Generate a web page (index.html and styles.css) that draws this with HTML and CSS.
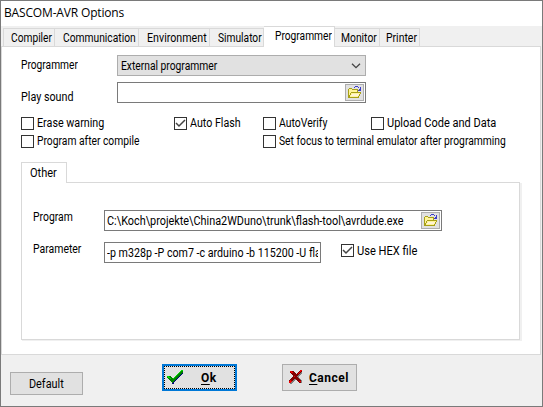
FILE: index.html
```
<!DOCTYPE html>
<html lang="en">
<head>
<meta charset="utf-8">
<title>BASCOM-AVR Options</title>
<link rel="stylesheet" href="styles.css">
</head>
<body>
<svg class="defs" aria-hidden="true">
  <symbol id="folder" viewBox="0 0 17 17" shape-rendering="crispEdges">
    <path d="M2 5h5v1h5v3h3l-3 5H2z" fill="#fff49a"/>
    <path d="M6 10h7l-1 2H5z" fill="#fff3d6"/>
    <path d="M3 4h3v1H3zM6 5h6v1H6zM2 5h1v8H2zM11 6h1v2h-1zM5 8h10v1H5zM4 9h1v2H4zM3 11h1v2H3zM14 9h1v1h-1zM13 10h1v2h-1zM12 12h1v1h-1zM2 13h11v1H2z" fill="#a8a018"/>
    <path d="M9 2h3v1H9zM8 3h1v1H8zM12 3h1v1h-1zM14 3h1v4h-3V6h1V5h1z" fill="#3c3cc8"/>
  </symbol>
  <symbol id="tick" viewBox="0 0 13 13">
    <path d="M2 6l3 3 6-6" fill="none" stroke="#444" stroke-width="1.5"/>
  </symbol>
</svg>
<main class="window">
  <header class="titlebar"><span class="title">BASCOM-AVR Options</span></header>
  <nav class="tabs">
    <div class="tab compiler"><span class="t">Compiler</span></div>
    <div class="tab communication"><span class="t">Communication</span></div>
    <div class="tab environment"><span class="t">Environment</span></div>
    <div class="tab simulator"><span class="t">Simulator</span></div>
    <div class="tab active"><span class="t">Programmer</span></div>
    <div class="tab monitor"><span class="t">Monitor</span></div>
    <div class="tab printer"><span class="t">Printer</span></div>
  </nav>
  <section class="page">
    <div class="row">
      <label class="t w85">Programmer</label>
      <div class="combo"><span class="t w86">External programmer</span>
        <svg class="chevron" viewBox="0 0 10 6"><path d="M1 .7l4 4 4-4" fill="none" stroke="#444" stroke-width="1.3"/></svg>
      </div>
    </div>
    <div class="row sound">
      <label class="t w90">Play sound</label>
      <div class="field"><span></span><button class="browse"><svg><use href="#folder"/></svg></button></div>
    </div>
    <div class="checks">
      <div class="check"><i class="box"></i><span class="t w90">Erase warning</span></div>
      <div class="check"><i class="box"><svg><use href="#tick"/></svg></i><span class="t w89">Auto Flash</span></div>
      <div class="check"><i class="box"></i><span class="t w88">AutoVerify</span></div>
      <div class="check"><i class="box"></i><span class="t w92">Upload Code and Data</span></div>
      <div class="check after"><i class="box"></i><span class="t w86">Program after compile</span></div>
      <div class="check"><i class="box"></i><span class="t w86">Set focus to terminal emulator after programming</span></div>
    </div>
    <div class="subtab"><span class="t w92">Other</span></div>
    <div class="panel">
      <div class="prow">
        <label class="t w87">Program</label>
        <div class="field path"><span class="t w91">C:\Koch\projekte\China2WDuno\trunk\flash-tool\avrdude.exe</span><button class="browse"><svg><use href="#folder"/></svg></button></div>
      </div>
      <div class="prow">
        <label class="t w88">Parameter</label>
        <div class="field params"><span class="clip"><span class="t w89">-p m328p -P com7 -c arduino -b 115200 -U fla</span></span></div>
        <div class="check hex"><i class="box"><svg><use href="#tick"/></svg></i><span class="t w93">Use HEX file</span></div>
      </div>
    </div>
  </section>
  <footer class="actions">
    <button class="btn default"><span class="t w91">Default</span></button>
    <button class="btn ok">
      <svg class="ok-icon" viewBox="0 0 17 15" shape-rendering="crispEdges">
        <path d="M1 7h2l3 3 9-9h1v2L7 13v1H5v-1L1 9z" fill="#000080"/>
        <path d="M0 6h3l3 3 8-9h2v2L6 12v1H5L0 8z" fill="#008000"/>
        <path d="M0 6h2v1h1v1h1v1H3V8H1V7H0zM14 0h2v1h-2v1h-1v1h-1v1h-1v1h-1v1H9v1H8v1H7v1H6V8h1V7h1V6h1V5h1V4h1V3h1V2h1V1h1z" fill="#00e000"/>
      </svg>
      <span class="t bold"><u>O</u>k</span>
    </button>
    <button class="btn cancel">
      <svg class="cancel-icon" viewBox="0 0 14 15" shape-rendering="crispEdges">
        <path d="M2 2h3l3 3 4-4h1v2L9 7l4 4v2h-2L7 9l-4 5H1v-2l4-5-3-4z" fill="#808080"/>
        <path d="M1 1h3l3 3 4-4h2v1L8 6l4 5v2h-2L6 8l-4 5H0v-2l4-5-3-3z" fill="#800000"/>
        <path d="M1 1h2v1h1v1H2V2H1zM11 0h2v1h-1v1h-1v1h-1v1H9V3h1V2h1zM0 11h1v-1h1v1h1v1H2v1H0zM5 6h1v1H5zM10 11h2v1h-2z" fill="#f00000"/>
      </svg>
      <span class="t bold"><u>C</u>ancel</span>
    </button>
  </footer>
</main>
</body>
</html>
```
FILE: styles.css
```
* { box-sizing: border-box; }
body { margin: 0; font: 12px/14px Roboto, "Liberation Sans", sans-serif; color: #000; }
button { font: inherit; color: inherit; padding: 0; margin: 0; border-radius: 0; }
svg { display: block; }
.defs { position: absolute; width: 0; height: 0; }

.window {
  width: 543px; height: 407px; overflow: hidden;
  border: 1px solid #7a7a7a; background: #f0f0f0;
  display: flex; flex-direction: column;
}
.titlebar { height: 25px; flex: none; background: #fff; padding: 4px 0 0 3px; }
.title { font: 12px/16px "Open Sans", sans-serif; letter-spacing: -.16px; white-space: nowrap; }

/* Narrow label text: each width class sets the horizontal scale. */
.t { display: inline-block; white-space: nowrap; transform: scaleX(var(--s, .86)); transform-origin: 0 50%; }
.w85 { --s: .85; } .w86 { --s: .857; } .w87 { --s: .865; } .w88 { --s: .87; }
.w89 { --s: .889; } .w90 { --s: .895; } .w91 { --s: .904; } .w92 { --s: .918; } .w93 { --s: .927; }

.tabs { display: flex; height: 21px; flex: none; align-items: flex-end; padding-left: 2px; position: relative; z-index: 1; }
.tab { height: 19px; flex: none; border: 1px solid #d9d9d9; border-left: 0; padding: 2px 0 0 8px; }
.compiler { width: 52px; border-left: 1px solid #d9d9d9; --s: .85; padding-left: 7px; }
.communication { width: 84px; --s: .855; }
.environment { width: 71px; --s: .89; }
.simulator { width: 54px; --s: .85; }
.active { width: 71px; height: 21px; background: #fff; border-bottom: 0; --s: .85; padding: 2px 0 0 11px; }
.monitor { width: 45px; --s: .86; padding-left: 6px; }
.printer { width: 40px; --s: .87; padding-left: 6px; }

.page {
  height: 309px; width: 540px; margin-top: -1px; flex: none;
  background: #fff; border: 1px solid #d9d9d9;
  padding: 8px 19px 0 19px;
}
.row { display: grid; grid-template-columns: 96px 249px; height: 21px; }
.row label { padding-top: 3px; }
.sound { margin-top: 6px; }
.sound label { padding-top: 8px; }
.combo { background: #e1e1e1; border: 1px solid #adadad; display: flex; align-items: center; justify-content: space-between; padding: 0 4px 0 3px; }
.chevron { width: 10px; height: 6px; }
.field { background: #fff; border: 1px solid #7a7a7a; display: flex; justify-content: space-between; align-items: center; height: 21px; min-width: 0; }
.browse { width: 19px; height: 17px; flex: none; margin-right: 1px; background: #e1e1e1; border: 1px solid #adadad; }
.browse svg { width: 17px; height: 17px; margin-top: -1px; }

.checks { display: grid; grid-template-columns: 153px 89px 108px 150px; grid-template-rows: 18px 18px; margin-top: 11px; }
.check { display: flex; align-items: center; height: 18px; }
.after { grid-column: 1 / 3; }
.box { width: 13px; height: 13px; flex: none; background: #fff; border: 1px solid #333; margin-right: 3px; }
.box svg { width: 13px; height: 13px; margin: -1px; }

.subtab { width: 46px; height: 21px; margin-top: 12px; border: 1px solid #d9d9d9; border-bottom: 0; background: #fff; padding: 3px 0 0 8px; position: relative; z-index: 1; }
.panel { width: 499px; height: 158px; margin-top: -1px; border: 1px solid #d9d9d9; box-shadow: 1px 1px 0 #f0f0f0, 2px 1px 0 #f0f0f0; padding: 27px 0 0 11px; }
.prow { display: grid; grid-template-columns: 71px auto auto; justify-content: start; height: 32px; }
.path { width: 338px; padding-left: 2px; }
.path .t { width: 310px; }
.params { width: 217px; padding: 0 2px; }
.clip { overflow: hidden; height: 14px; width: 212px; }
.hex { margin-left: 20px; height: 17px; }

.actions { display: flex; align-items: flex-start; flex: 1; padding: 9px 0 0 9px; }
.btn { background: #e1e1e1; border: 1px solid #adadad; display: flex; align-items: center; flex: none; }
.default { width: 73px; height: 23px; margin-top: 8px; padding-left: 18px; }
.ok { width: 75px; height: 27px; margin-left: 79px; border: 2px solid #0078d7; outline: 1px dotted #000; outline-offset: -3px; padding-left: 3px; }
.ok-icon { width: 17px; height: 15px; margin-right: 17px; }
.cancel { width: 75px; height: 27px; margin-left: 45px; padding-left: 6px; }
.cancel-icon { width: 14px; height: 15px; margin-right: 6px; }
.bold { font-weight: 700; --s: 1; letter-spacing: .5px; }
.bold u { text-underline-offset: 2px; }
```
